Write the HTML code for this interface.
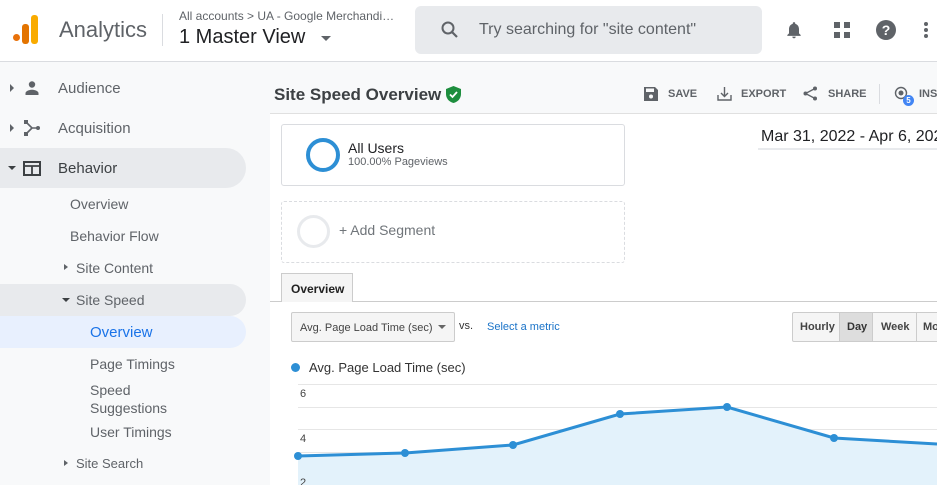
<!DOCTYPE html>
<html><head><meta charset="utf-8"><style>
*{box-sizing:border-box;margin:0;padding:0}
body{width:937px;height:485px;overflow:hidden;font-family:"Liberation Sans",Arial,sans-serif;background:#fff;position:relative;color:#3c4043}
.a{position:absolute;white-space:nowrap}
.top{left:0;top:0;width:937px;height:62px;background:#fff;border-bottom:1px solid #dadce0}
.side{left:0;top:62px;width:270px;height:423px;background:#f8f9fa}
.nav{position:absolute;font-size:14px;color:#5f6368;white-space:nowrap}
.tri{position:absolute;width:0;height:0}
.hdr{left:270px;top:62px;width:667px;height:52px;background:#f8f9fa;border-bottom:1px solid #e0e0e0}
.btn{position:absolute;top:88px;font-size:11px;font-weight:bold;color:#5f6368}
</style></head><body>
<div class="a top"></div>
<div class="a" style="left:13px;top:34px;width:7px;height:7px;border-radius:50%;background:#e8710a"></div>
<div class="a" style="left:22px;top:24px;width:7px;height:20px;border-radius:3px;background:#e37400"></div>
<div class="a" style="left:31px;top:15px;width:7px;height:29px;border-radius:3px;background:#f9ab00"></div>
<div class="a" style="left:59px;top:17px;font-size:22px;color:#5f6368">Analytics</div>
<div class="a" style="left:162px;top:14px;width:1px;height:32px;background:#dadce0"></div>
<div class="a" style="left:179px;top:9px;font-size:12px;color:#5f6368">All accounts &gt; UA - Google Merchandi…</div>
<div class="a" style="left:179px;top:26px;font-size:20px;color:#202124">1 Master View</div>
<div class="tri" style="left:321px;top:36px;border-left:5px solid transparent;border-right:5px solid transparent;border-top:5px solid #5f6368"></div>
<div class="a" style="left:415px;top:6px;width:347px;height:48px;border-radius:6px;background:#e8eaed"></div>
<svg class="a" style="left:440px;top:20px" width="20" height="20" viewBox="0 0 20 20"><circle cx="8" cy="8" r="5.5" fill="none" stroke="#5f6368" stroke-width="2"/><path d="M12 12l5 5" stroke="#5f6368" stroke-width="2.2"/></svg>
<div class="a" style="left:479px;top:21px;font-size:16px;color:#5f6368">Try searching for "site content"</div>
<svg class="a" style="left:784px;top:20px" width="20" height="20" viewBox="0 0 24 24"><path fill="#5f6368" d="M12 22a2 2 0 0 0 2-2h-4a2 2 0 0 0 2 2zm6-6V11c0-3-1.6-5.6-4.5-6.3V4a1.5 1.5 0 0 0-3 0v.7C7.6 5.4 6 8 6 11v5l-2 2v1h16v-1z"/></svg>
<svg class="a" style="left:833px;top:21px" width="18" height="18" viewBox="0 0 18 18"><g fill="#5f6368"><rect x="1" y="1" width="6" height="6"/><rect x="11" y="1" width="6" height="6"/><rect x="1" y="11" width="6" height="6"/><rect x="11" y="11" width="6" height="6"/></g></svg>
<div class="a" style="left:876px;top:20px;width:20px;height:20px;border-radius:50%;background:#5f6368;color:#fff;font-size:14px;font-weight:bold;text-align:center;line-height:20px">?</div>
<div class="a" style="left:924px;top:22px;width:4px;height:4px;border-radius:50%;background:#5f6368;box-shadow:0 6px 0 #5f6368,0 12px 0 #5f6368"></div>

<div class="a side"></div>
<div class="a" style="left:0;top:148px;width:246px;height:40px;background:#e8eaed;border-radius:0 20px 20px 0"></div>
<div class="a" style="left:0;top:284px;width:246px;height:32px;background:#e8eaed;border-radius:0 16px 16px 0"></div>
<div class="a" style="left:0;top:316px;width:246px;height:32px;background:#e8f0fe;border-radius:0 16px 16px 0"></div>
<div class="tri" style="left:10px;top:84px;border-top:4px solid transparent;border-bottom:4px solid transparent;border-left:4px solid #5f6368"></div>
<div class="tri" style="left:10px;top:124px;border-top:4px solid transparent;border-bottom:4px solid transparent;border-left:4px solid #5f6368"></div>
<div class="tri" style="left:8px;top:166px;border-left:4px solid transparent;border-right:4px solid transparent;border-top:4px solid #3c4043"></div>
<svg class="a" style="left:24px;top:80px" width="16" height="16" viewBox="0 0 16 16"><circle cx="8" cy="4.5" r="3.2" fill="#5f6368"/><path d="M1.5 15v-2c0-2 4-3.3 6.5-3.3s6.5 1.3 6.5 3.3v2z" fill="#5f6368"/></svg>
<svg class="a" style="left:24px;top:120px" width="16" height="16" viewBox="0 0 16 16"><g fill="#5f6368"><rect x="0" y="0" width="4" height="4"/><rect x="0" y="12" width="4" height="4"/><circle cx="14" cy="8" r="2"/></g><path d="M3 3l5 5H13M8 8l-5 5" stroke="#5f6368" stroke-width="1.6" fill="none"/></svg>
<svg class="a" style="left:23px;top:161px" width="18" height="15" viewBox="0 0 18 15"><rect x="1" y="1" width="16" height="13" fill="none" stroke="#3c4043" stroke-width="2"/><path d="M1 5h16M9 5v9" stroke="#3c4043" stroke-width="1.8"/></svg>
<div class="nav" style="left:58px;top:80px;font-size:15px">Audience</div>
<div class="nav" style="left:58px;top:120px;font-size:15px">Acquisition</div>
<div class="nav" style="left:58px;top:160px;font-size:15px;color:#3c4043">Behavior</div>
<div class="nav" style="left:70px;top:196px">Overview</div>
<div class="nav" style="left:70px;top:228px">Behavior Flow</div>
<div class="tri" style="left:64px;top:264px;border-top:3.5px solid transparent;border-bottom:3.5px solid transparent;border-left:4px solid #5f6368"></div>
<div class="nav" style="left:76px;top:260px">Site Content</div>
<div class="tri" style="left:62px;top:298px;border-left:4px solid transparent;border-right:4px solid transparent;border-top:4px solid #3c4043"></div>
<div class="nav" style="left:76px;top:292px">Site Speed</div>
<div class="nav" style="left:90px;top:324px;color:#1a73e8;font-size:15px">Overview</div>
<div class="nav" style="left:90px;top:356px">Page Timings</div>
<div class="nav" style="left:90px;top:381px;line-height:18px">Speed<br>Suggestions</div>
<div class="nav" style="left:90px;top:424px">User Timings</div>
<div class="tri" style="left:64px;top:460px;border-top:3.5px solid transparent;border-bottom:3.5px solid transparent;border-left:4px solid #5f6368"></div>
<div class="nav" style="left:76px;top:456px;font-size:13px">Site Search</div>

<div class="a hdr"></div>
<div class="a" style="left:274px;top:85px;font-size:17px;font-weight:bold;color:#3c4043">Site Speed Overview</div>
<svg class="a" style="left:446px;top:86px" width="15" height="17" viewBox="0 0 15 17"><path d="M7.5 0L0 3v5c0 4.5 3.2 8 7.5 9 4.3-1 7.5-4.5 7.5-9V3z" fill="#1e8e3e"/><path d="M4 8.5l2.5 2.5 4.5-5" stroke="#fff" stroke-width="1.8" fill="none"/></svg>
<svg class="a" style="left:644px;top:87px" width="14" height="14" viewBox="0 0 14 14"><path d="M0 0h11l3 3v11H0z" fill="#5f6368"/><rect x="2" y="1.5" width="8" height="3.5" fill="#f8f9fa"/><circle cx="7" cy="9.5" r="2" fill="#f8f9fa"/></svg>
<div class="btn" style="left:668px">SAVE</div>
<svg class="a" style="left:717px;top:86px" width="15" height="15" viewBox="0 0 15 15"><path d="M1 9v5h13V9M7.5 1v9M4 7l3.5 3.5L11 7" stroke="#5f6368" stroke-width="1.4" fill="none"/></svg>
<div class="btn" style="left:741px">EXPORT</div>
<svg class="a" style="left:803px;top:86px" width="15" height="15" viewBox="0 0 15 15"><circle cx="12" cy="2.5" r="2" fill="#5f6368"/><circle cx="2.5" cy="7.5" r="2" fill="#5f6368"/><circle cx="12" cy="12.5" r="2" fill="#5f6368"/><path d="M12 2.5L2.5 7.5 12 12.5" stroke="#5f6368" stroke-width="1.3" fill="none"/></svg>
<div class="btn" style="left:828px">SHARE</div>
<div class="a" style="left:879px;top:84px;width:1px;height:20px;background:#dadce0"></div>
<svg class="a" style="left:894px;top:86px" width="16" height="16" viewBox="0 0 16 16"><circle cx="7" cy="7" r="5.5" fill="none" stroke="#5f6368" stroke-width="1.4"/><circle cx="7" cy="7" r="2.5" fill="#5f6368"/></svg>
<div class="a" style="left:903px;top:95px;width:11px;height:11px;border-radius:50%;background:#4285f4;color:#fff;font-size:8px;font-weight:bold;text-align:center;line-height:11px">5</div>
<div class="btn" style="left:919px">INS</div>

<div class="a" style="left:281px;top:124px;width:344px;height:62px;border:1px solid #dadce0;border-radius:3px"></div>
<div class="a" style="left:306px;top:138px;width:34px;height:34px;border-radius:50%;border:4px solid #2d8fd5"></div>
<div class="a" style="left:348px;top:140px;font-size:14px;color:#202124">All Users</div>
<div class="a" style="left:348px;top:156px;font-size:11px;color:#5f6368">100.00% Pageviews</div>
<div class="a" style="left:281px;top:201px;width:344px;height:62px;border:1px dashed #dadce0;border-radius:3px"></div>
<div class="a" style="left:297px;top:215px;width:33px;height:33px;border-radius:50%;border:3px solid #e8eaed"></div>
<div class="a" style="left:339px;top:222px;font-size:14px;color:#70757a">+ Add Segment</div>
<div class="a" style="left:761px;top:128px;font-size:16px;color:#202124">Mar 31, 2022 - Apr 6, 2022</div>
<div class="a" style="left:758px;top:148px;width:179px;height:2px;background:#e8eaed"></div>

<div class="a" style="left:270px;top:301px;width:667px;height:1px;background:#ccc"></div>
<div class="a" style="left:281px;top:273px;width:72px;height:29px;border:1px solid #ccc;border-bottom:none;background:#f5f5f5;font-size:12px;font-weight:bold;color:#222;padding:8px 0 0 9px">Overview</div>
<div class="a" style="left:291px;top:312px;width:164px;height:30px;border:1px solid #ccc;border-radius:2px;background:#f5f5f5;font-size:11px;color:#444;padding:9px 0 0 8px">Avg. Page Load Time (sec)</div>
<div class="tri" style="left:438px;top:325px;border-left:4px solid transparent;border-right:4px solid transparent;border-top:4px solid #666"></div>
<div class="a" style="left:459px;top:320px;font-size:11px;color:#333">vs.</div>
<div class="a" style="left:487px;top:321px;font-size:11px;color:#1a73c8">Select a metric</div>
<div class="a" style="left:792px;top:312px;width:150px;height:30px;border:1px solid #ccc;border-radius:2px;background:#f5f5f5"></div>
<div class="a" style="left:839px;top:313px;width:34px;height:28px;background:#ddd;border-left:1px solid #ccc;border-right:1px solid #ccc"></div>
<div class="a" style="left:916px;top:313px;width:1px;height:28px;background:#ccc"></div>
<div class="a" style="left:800px;top:321px;font-size:11px;font-weight:bold;color:#444">Hourly</div>
<div class="a" style="left:847px;top:321px;font-size:11px;font-weight:bold;color:#333">Day</div>
<div class="a" style="left:881px;top:321px;font-size:11px;font-weight:bold;color:#444">Week</div>
<div class="a" style="left:923px;top:321px;font-size:11px;font-weight:bold;color:#444">Mo</div>

<div class="a" style="left:291px;top:363px;width:9px;height:9px;border-radius:50%;background:#2d8fd5"></div>
<div class="a" style="left:309px;top:360px;font-size:13px;color:#333">Avg. Page Load Time (sec)</div>
<svg class="a" style="left:270px;top:380px" width="667" height="105" viewBox="270 380 667 105">
<g stroke="#e6e6e6" stroke-width="1"><path d="M298 384.5H937M298 407.5H937M298 429.5H937M298 452.5H937M298 473.5H937"/></g>
<path d="M298 456L405 453L513 445L620 414L727 407L834 438L937 444V485H298Z" fill="#e3f2fb"/>
<path d="M298 456L405 453L513 445L620 414L727 407L834 438L937 444" fill="none" stroke="#2d8fd5" stroke-width="3"/>
<g fill="#2d8fd5"><circle cx="298" cy="456" r="4"/><circle cx="405" cy="453" r="4"/><circle cx="513" cy="445" r="4"/><circle cx="620" cy="414" r="4"/><circle cx="727" cy="407" r="4"/><circle cx="834" cy="438" r="4"/></g>
<g font-size="11" fill="#444" font-family="Liberation Sans,sans-serif"><text x="300" y="397">6</text><text x="300" y="442">4</text><text x="300" y="486">2</text></g>
</svg>
</body></html>
